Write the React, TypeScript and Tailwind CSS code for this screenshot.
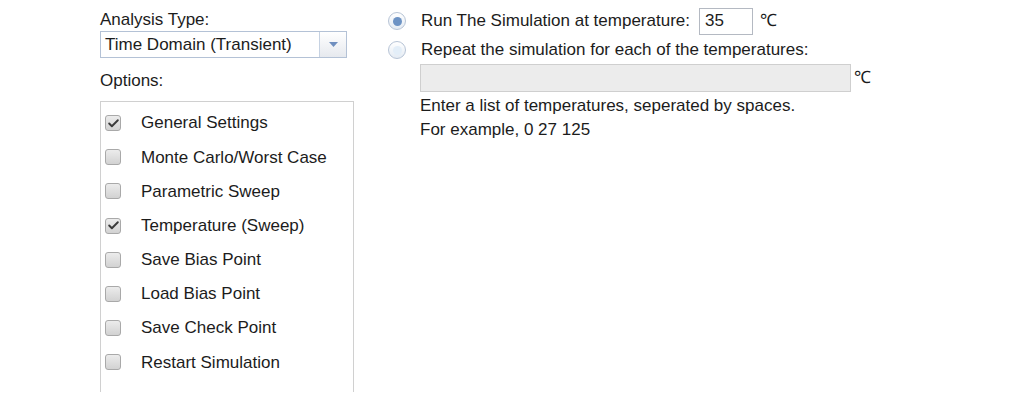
import { Check } from "lucide-react";

const options = [
  { label: "General Settings", checked: true },
  { label: "Monte Carlo/Worst Case", checked: false },
  { label: "Parametric Sweep", checked: false },
  { label: "Temperature (Sweep)", checked: true },
  { label: "Save Bias Point", checked: false },
  { label: "Load Bias Point", checked: false },
  { label: "Save Check Point", checked: false },
  { label: "Restart Simulation", checked: false },
];

function CheckBox({ checked }: { checked: boolean }) {
  return (
    <span className="w-[16px] h-[16px] rounded-[3px] border border-[#a9a9a9] bg-gradient-to-b from-[#ececec] to-[#d2d2d2] flex items-center justify-center">
      {checked && <Check size={13} strokeWidth={3.5} className="text-[#3a3a3a]" />}
    </span>
  );
}

function Radio({ checked }: { checked: boolean }) {
  return (
    <span className="w-[18px] h-[18px] rounded-full border border-[#b7c4d6] bg-gradient-to-b from-white to-[#e4ebf3] flex items-center justify-center">
      <span className={checked ? "w-[9px] h-[9px] rounded-full bg-[#6d93c4]" : "w-[9px] h-[9px] rounded-full bg-[#e3eef8]"} />
    </span>
  );
}

export default function App() {
  return (
    <div
      className="h-[403px] w-[1013px] overflow-hidden bg-white flex text-[17px] text-[#1c1c1c]"
      style={{ fontFamily: '"Liberation Sans", Arial, sans-serif' }}
    >
      <div className="ml-[100px] w-[254px] pt-[10px] flex flex-col">
        <div className="leading-[20px]">Analysis Type:</div>
        <div className="mt-[1px] w-[247px] h-[27px] border border-[#b4c2d6] flex items-center">
          <span className="flex-1 pl-[4px] leading-none">Time Domain (Transient)</span>
          <span className="w-[27px] h-full border-l border-[#c6d2e2] bg-gradient-to-b from-white to-[#e6e9ee] flex items-center justify-center">
            <svg width="9" height="5" viewBox="0 0 9 5">
              <path d="M0 0 H9 L4.5 5 Z" fill="#6f8fbf" />
            </svg>
          </span>
        </div>
        <div className="mt-[13px] leading-[20px]">Options:</div>
        <div className="mt-[10px] w-[254px] h-[291px] border border-b-0 border-[#d0d0d0] pt-[4px] flex flex-col">
          {options.map((o) => (
            <div key={o.label} className="h-[34.2px] flex items-center">
              <span className="ml-[4px] w-[36px]">
                <CheckBox checked={o.checked} />
              </span>
              <span>{o.label}</span>
            </div>
          ))}
        </div>
      </div>

      <div className="ml-[34px] pt-[7px] flex flex-col">
        <div className="h-[28px] flex items-center">
          <span className="w-[33px]">
            <Radio checked />
          </span>
          <span>Run The Simulation at temperature:</span>
          <span className="ml-[9px] w-[54px] h-[27px] border border-[#b4b9c2] pl-[5px] flex items-center">35</span>
          <span className="ml-[7px]">℃</span>
        </div>
        <div className="mt-[1px] h-[28px] flex items-center">
          <span className="w-[33px]">
            <Radio checked={false} />
          </span>
          <span>Repeat the simulation for each of the temperatures:</span>
        </div>
        <div className="ml-[32px] flex flex-col">
          <div className="flex items-center">
            <div className="w-[431px] h-[28px] border border-[#cfcfcf] bg-[#ececec]" />
            <span className="ml-[3px]">℃</span>
          </div>
          <div className="mt-[2px] leading-[24px]">Enter a list of temperatures, seperated by spaces.</div>
          <div className="leading-[24px]">For example, 0 27 125</div>
        </div>
      </div>
    </div>
  );
}
